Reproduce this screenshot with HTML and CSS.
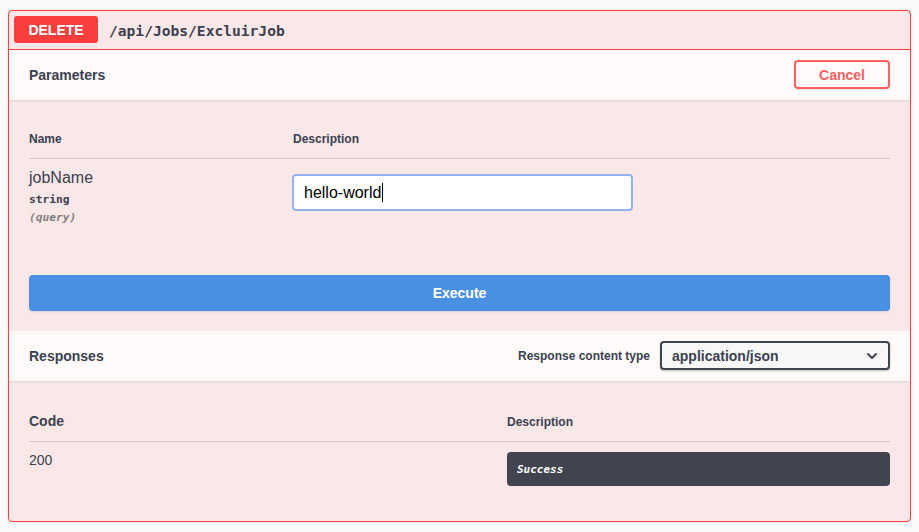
FILE: index.html
```html
<!DOCTYPE html>
<html>
<head>
<meta charset="utf-8">
<link rel="stylesheet" href="styles.css">
</head>
<body>
<div class="opblock">
  <div class="summary">
    <span class="method">DELETE</span>
    <span class="path">/api/Jobs/ExcluirJob</span>
  </div>
  <div class="section-header">
    <h4 class="section-title">Parameters</h4>
    <button class="btn-cancel">Cancel</button>
  </div>
  <div class="params-body">
    <div class="ptable">
      <div class="prow phead">
        <div class="pcol-name">Name</div>
        <div class="pcol-desc">Description</div>
      </div>
      <div class="prow pdata">
        <div class="pcol-name">
          <div class="param-name">jobName</div>
          <div class="param-type">string</div>
          <div class="param-in">(query)</div>
        </div>
        <div class="pcol-desc">
          <div class="input"><span>hello-world</span><span class="caret"></span></div>
        </div>
      </div>
    </div>
  </div>
  <div class="execute-wrap">
    <button class="btn-execute">Execute</button>
  </div>
  <div class="section-header">
    <h4 class="section-title">Responses</h4>
    <div class="content-type">
      <span class="ct-label">Response content type</span>
      <div class="select">
        <span>application/json</span>
        <svg class="chev" width="10" height="6" viewBox="0 0 10 6"><path d="M1 1 L5 5 L9 1" fill="none" stroke="#3b4151" stroke-width="1.8" stroke-linecap="round" stroke-linejoin="round"/></svg>
      </div>
    </div>
  </div>
  <div class="responses-body">
    <div class="rrow rhead">
      <div class="rcol-code code-h">Code</div>
      <div class="rcol-desc desc-h">Description</div>
    </div>
    <div class="rrow rdata">
      <div class="rcol-code code-v">200</div>
      <div class="rcol-desc"><div class="markdown">Success</div></div>
    </div>
  </div>
</div>
</body>
</html>
```

FILE: styles.css
```css
html, body {
  margin: 0;
  padding: 0;
  background: #fafafa;
}
body {
  padding: 10px 8px;
  font-family: "Liberation Sans", Arial, sans-serif;
  color: #3b4151;
}
.opblock {
  border: 1px solid #f93e3e;
  border-radius: 4px;
  background: #fae7e7;
  box-shadow: 0 0 3px rgba(0,0,0,.12);
}
.summary {
  display: flex;
  align-items: center;
  height: 38px;
  padding: 0 5px;
  border-bottom: 1px solid #f93e3e;
}
.method {
  display: flex;
  align-items: center;
  justify-content: center;
  width: 84px;
  height: 27px;
  margin-top: -1px;
  background: #f93e3e;
  border-radius: 3px;
  color: #fff;
  font-weight: bold;
  font-size: 14px;
  text-shadow: 0 1px 0 rgba(0,0,0,.1);
}
.path {
  margin-left: 11px;
  font-family: "DejaVu Sans Mono", monospace;
  font-weight: bold;
  font-size: 14.6px;
  color: #3b4151;
}
.section-header {
  display: flex;
  align-items: center;
  justify-content: space-between;
  height: 50px;
  padding: 0 20px;
  background: #fefafa;
  box-shadow: 0 1px 2px rgba(0,0,0,.1);
}
.section-title {
  margin: 0;
  font-size: 14px;
  font-weight: bold;
  color: #3b4151;
}
.btn-cancel {
  width: 96px;
  height: 29px;
  margin-top: -1px;
  border: 2px solid #ff6060;
  border-radius: 4px;
  background: transparent;
  color: #ff6060;
  font-family: "Liberation Sans", Arial, sans-serif;
  font-size: 14px;
  font-weight: bold;
  box-shadow: 0 1px 2px rgba(0,0,0,.1);
  padding: 0;
}
.params-body {
  padding: 20px 20px 20px;
}
.prow {
  display: flex;
}
.pcol-name {
  width: 264px;
}
.pcol-desc {
  flex: 1;
}
.phead {
  padding: 12px 0;
  border-bottom: 1px solid rgba(59,65,81,.2);
  font-size: 12px;
  font-weight: bold;
  line-height: 14px;
}
.pdata {
  padding: 10px 0 13px;
}
.param-name {
  font-size: 16px;
  line-height: 18px;
}
.param-type {
  padding: 6px 0 3px;
  font-family: "DejaVu Sans Mono", monospace;
  font-size: 11.2px;
  font-weight: bold;
  line-height: 14px;
}
.param-in {
  font-family: "DejaVu Sans Mono", monospace;
  font-size: 11.2px;
  font-weight: bold;
  font-style: italic;
  line-height: 16px;
  color: #808080;
}
.input {
  display: flex;
  align-items: center;
  box-sizing: border-box;
  width: 341px;
  height: 37px;
  margin: 5px 0 0 -1px;
  padding: 0 10px;
  border: 2px solid #91b3ef;
  border-radius: 4px;
  background: #fff;
  font-size: 16px;
  color: #000;
}
.caret {
  width: 1px;
  height: 19px;
  background: #000;
  margin-left: 1px;
}
.execute-wrap {
  padding: 16px 20px 20px;
}
.btn-execute {
  display: block;
  width: 100%;
  height: 36px;
  border: none;
  border-radius: 4px;
  background: #4990e2;
  color: #fff;
  font-family: "Liberation Sans", Arial, sans-serif;
  font-size: 14px;
  font-weight: bold;
  box-shadow: 0 1px 2px rgba(0,0,0,.1);
}
.content-type {
  display: flex;
  align-items: center;
}
.ct-label {
  font-size: 12px;
  font-weight: bold;
  margin-right: 10px;
}
.select {
  display: flex;
  align-items: center;
  justify-content: space-between;
  box-sizing: border-box;
  width: 230px;
  height: 29px;
  margin-top: -1px;
  padding: 0 11px 0 10px;
  border: 2px solid #41444e;
  border-radius: 4px;
  background: #f7f7f7;
  box-shadow: 0 1px 2px rgba(0,0,0,.25);
  font-size: 14px;
  font-weight: bold;
}
.chev {
  display: block;
}
.responses-body {
  padding: 20px 20px 20px;
}
.rrow {
  display: flex;
}
.rcol-code {
  width: 478px;
}
.rcol-desc {
  flex: 1;
}
.rhead {
  align-items: baseline;
  padding: 12px 0;
  border-bottom: 1px solid rgba(59,65,81,.2);
  font-weight: bold;
}
.code-h {
  font-size: 14px;
  line-height: 16px;
}
.desc-h {
  font-size: 12px;
}
.rdata {
  padding: 10px 0;
}
.code-v {
  font-size: 14px;
  line-height: 16px;
}
.markdown {
  display: flex;
  align-items: center;
  height: 34px;
  margin-bottom: 5px;
  padding: 0 10px;
  background: #41444e;
  border-radius: 4px;
  color: #fff;
  font-family: "DejaVu Sans Mono", monospace;
  font-size: 11px;
  font-weight: bold;
  font-style: italic;
}
```
